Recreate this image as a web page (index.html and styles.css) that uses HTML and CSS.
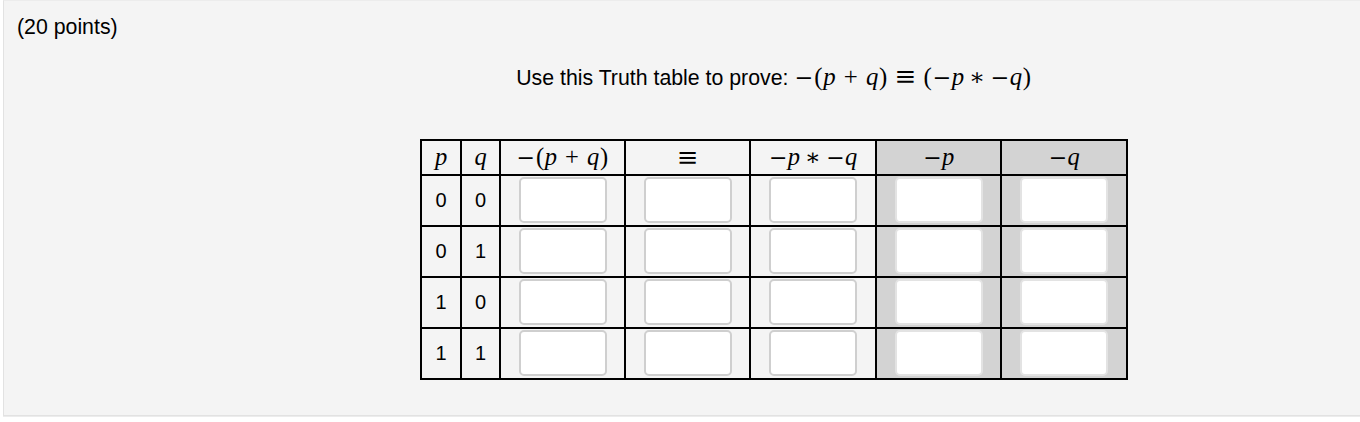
FILE: index.html
```html
<!DOCTYPE html>
<html>
<head>
<meta charset="utf-8">
<link rel="stylesheet" href="styles.css">
</head>
<body>
<div class="panel">
  <div class="points">(20 points)</div>
  <div class="prompt">Use this Truth table to prove: <span class="math title-math"><span class="un"><span class="mn">−</span></span><span class="pa">(</span><i>p</i><span class="bin">+</span><i>q</i><span class="pa">)</span><span class="rel"><span class="eq">≡</span></span><span class="pa">(</span><span class="un"><span class="mn">−</span></span><i>p</i><span class="bin ast">∗</span><span class="un"><span class="mn">−</span></span><i>q</i><span class="pa">)</span></span></div>
  <div class="table-wrap">
    <div class="truth">
      <div class="cell head"><span class="math"><i>p</i></span></div>
      <div class="cell head"><span class="math"><i>q</i></span></div>
      <div class="cell head"><span class="math"><span class="un"><span class="mn">−</span></span><span class="pa">(</span><i>p</i><span class="bin">+</span><i>q</i><span class="pa">)</span></span></div>
      <div class="cell head"><span class="math"><span class="eq">≡</span></span></div>
      <div class="cell head"><span class="math"><span class="un"><span class="mn">−</span></span><i>p</i><span class="bin ast">∗</span><span class="un"><span class="mn">−</span></span><i>q</i></span></div>
      <div class="cell head shade"><span class="math"><span class="un"><span class="mn">−</span></span><i>p</i></span></div>
      <div class="cell head shade"><span class="math"><span class="un"><span class="mn">−</span></span><i>q</i></span></div>

      <div class="cell val">0</div><div class="cell val">0</div>
      <div class="cell inp"><span class="box"></span></div><div class="cell inp"><span class="box"></span></div><div class="cell inp"><span class="box"></span></div>
      <div class="cell inp shade"><span class="box"></span></div><div class="cell inp shade"><span class="box"></span></div>

      <div class="cell val">0</div><div class="cell val">1</div>
      <div class="cell inp"><span class="box"></span></div><div class="cell inp"><span class="box"></span></div><div class="cell inp"><span class="box"></span></div>
      <div class="cell inp shade"><span class="box"></span></div><div class="cell inp shade"><span class="box"></span></div>

      <div class="cell val">1</div><div class="cell val">0</div>
      <div class="cell inp"><span class="box"></span></div><div class="cell inp"><span class="box"></span></div><div class="cell inp"><span class="box"></span></div>
      <div class="cell inp shade"><span class="box"></span></div><div class="cell inp shade"><span class="box"></span></div>

      <div class="cell val">1</div><div class="cell val">1</div>
      <div class="cell inp"><span class="box"></span></div><div class="cell inp"><span class="box"></span></div><div class="cell inp"><span class="box"></span></div>
      <div class="cell inp shade"><span class="box"></span></div><div class="cell inp shade"><span class="box"></span></div>
    </div>
  </div>
</div>
</body>
</html>
```
FILE: styles.css
```css
html, body {
  margin: 0;
  padding: 0;
  background: #ffffff;
  overflow: hidden;
}
body {
  width: 1360px;
  height: 422px;
  font-family: "Liberation Sans", Arial, sans-serif;
  color: #000;
}
.panel {
  box-sizing: border-box;
  margin-left: 3px;
  width: 1542px;
  height: 416px;
  background: #f4f4f4;
  border: 1px solid #e2e2e2;
  border-top-color: #ececec;
  box-shadow: 0 1px 0 #ececec;
  padding: 14px 13px 0 13px;
  display: flex;
  flex-direction: column;
}
.points {
  font-size: 21.3px;
  line-height: 24px;
}
.prompt {
  margin-top: 24px;
  height: 28px;
  text-align: center;
  font-size: 21.3px;
  line-height: 28px;
}
.math {
  font-family: "Liberation Serif", "DejaVu Serif", serif;
  font-size: 24.5px;
  white-space: nowrap;
  line-height: 1;
}
.math i {
  font-style: italic;
}
.title-math {
  font-size: 24.8px;
}
.un {
  display: inline-block;
  width: 0.778em;
  text-align: center;
}
.mn {
  font-family: "DejaVu Serif", serif;
  font-size: 0.9em;
}
.eq {
  font-family: "DejaVu Serif", serif;
  font-size: 1.05em;
  line-height: 1;
}
.pa {
  display: inline-block;
  width: 0.389em;
  text-align: center;
}
.bin {
  display: inline-block;
  padding: 0 0.222em;
}
.bin:not(.ast) {
  width: 0.778em;
  text-align: center;
}
.ast {
  font-family: "DejaVu Serif", serif;
  font-size: 0.95em;
}
.rel {
  display: inline-block;
  padding: 0 0.26em;
}
.table-wrap {
  margin-top: 48px;
  display: flex;
  justify-content: center;
}
.truth {
  display: grid;
  grid-template-columns: 38px 37px 123px 123px 124px 123px 124px;
  grid-template-rows: 33px 49px 49px 49px 49px;
  gap: 2px;
  padding: 2px;
  background: #000;
}
.cell {
  background: #f4f4f4;
  display: flex;
  justify-content: center;
  align-items: center;
}
.cell.shade {
  background: #d3d3d3;
}
.head {
  line-height: 1;
}
.val {
  font-size: 20px;
}
.inp {
  align-items: flex-start;
  padding-top: 1px;
}
.box {
  box-sizing: border-box;
  width: 88px;
  height: 46px;
  background: #fff;
  border: 2px solid #cfcfcf;
  border-radius: 5px;
}
.shade .box {
  border-color: #e3e3e3;
}
```
